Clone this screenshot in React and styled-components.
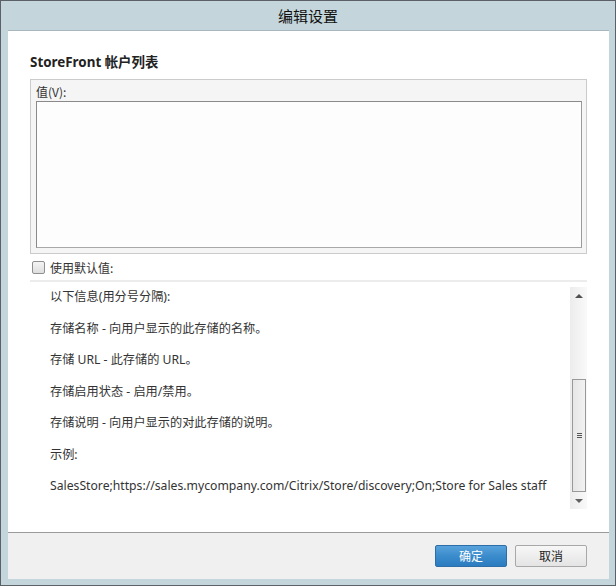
import React from "react";
import styled, { createGlobalStyle } from "styled-components";

const Global = createGlobalStyle`
  html, body { margin: 0; padding: 0; background: #c5d7dd; }
  body { font-family: "Noto Sans", "Noto Sans CJK SC", sans-serif; }
  * { box-sizing: border-box; }
`;

const Frame = styled.div`
  width: 616px;
  height: 586px;
  background: #c4d6dc;
  border: 1px solid #5b6167;
  display: flex;
  flex-direction: column;
`;

const TitleBar = styled.div`
  height: 29px;
  display: flex;
  align-items: center;
  justify-content: center;
  font-family: "Noto Sans CJK SC", sans-serif;
  font-size: 15px;
  color: #111;
`;

const Panel = styled.div`
  flex: 1;
  margin: 0 6px 6px 7px;
  background: #fff;
  border-top: 1px solid #a7b7bd;
  display: flex;
  flex-direction: column;
`;

const Content = styled.div`
  flex: 1;
  padding: 22px 22px 0 22px;
  display: flex;
  flex-direction: column;
`;

const Heading = styled.div`
  font-family: "Noto Sans", "Noto Sans CJK SC", sans-serif;
  font-weight: 700;
  font-size: 13.4px;
  line-height: 18px;
  color: #222;
`;

const GroupBox = styled.div`
  margin-top: 8px;
  height: 175px;
  background: #f5f5f5;
  border: 1px solid #cbcbcb;
  padding: 4px 4px 5px 5px;
  display: flex;
  flex-direction: column;
`;

const FieldLabel = styled.div`
  font-family: "Noto Sans CJK SC", sans-serif;
  font-size: 12px;
  line-height: 16px;
  color: #333;
  margin-bottom: 1px;
`;

const TextArea = styled.div`
  flex: 1;
  background: #fdfdfd;
  border: 1px solid #8a8a8a;
  border-right-color: #9a9a9a;
  border-bottom-color: #a8a8a8;
`;

const CheckRow = styled.label`
  display: flex;
  align-items: center;
  gap: 5px;
  height: 26px;
  padding-left: 2px;
  font-family: "Noto Sans CJK SC", sans-serif;
  font-size: 12px;
  color: #333;
`;

const CheckBox = styled.span`
  width: 13px;
  height: 13px;
  border: 1px solid #8f8f8f;
  border-radius: 2px;
  background: linear-gradient(#f4f4f4, #dedede);
`;

const Separator = styled.div`
  height: 2px;
  background: #ececec;
`;

const DescArea = styled.div`
  display: flex;
  height: 227px;
`;

const DescText = styled.div`
  flex: 1;
  padding: 6px 0 0 20px;
  display: flex;
  flex-direction: column;
  gap: 13.5px;
  font-family: "Noto Sans", "Noto Sans CJK SC", sans-serif;
  font-size: 12.2px;
  line-height: 18px;
  color: #333;
  overflow: hidden;
  white-space: nowrap;
`;

const Scrollbar = styled.div`
  width: 17px;
  margin-top: 5px;
  background: linear-gradient(to right, #ececec, #f9f9f9);
  display: flex;
  flex-direction: column;
  align-items: center;
`;

const Arrow = styled.div`
  height: 17px;
  display: flex;
  align-items: center;
  justify-content: center;
  &::after {
    content: "";
    border-left: 4px solid transparent;
    border-right: 4px solid transparent;
    ${(p) =>
      p.$up
        ? "border-bottom: 4px solid #505050;"
        : "border-top: 4px solid #606060;"}
  }
`;

const Track = styled.div`
  flex: 1;
  width: 100%;
  display: flex;
  flex-direction: column;
  justify-content: flex-end;
  padding: 0 1px 0 2px;
`;

const Thumb = styled.div`
  height: 113px;
  width: 100%;
  border: 1px solid #999;
  background: linear-gradient(to right, #e6e6e6, #f2f2f2);
  display: flex;
  align-items: center;
  justify-content: center;
  &::after {
    content: "";
    width: 5px;
    height: 5px;
    background: repeating-linear-gradient(#555 0 1px, transparent 1px 2px);
  }
`;

const Footer = styled.div`
  height: 47px;
  border-top: 1px solid #9a9a9a;
  background: #f0f0f0;
  display: flex;
  align-items: center;
  justify-content: flex-end;
  gap: 8px;
  padding: 0 22px 1px 0;
`;

const Button = styled.button`
  width: 72px;
  height: 22px;
  font-family: "Noto Sans CJK SC", sans-serif;
  font-size: 12px;
  padding: 0;
  border-radius: 2px;
  ${(p) =>
    p.$primary
      ? `
    color: #fff;
    border: 1px solid #2c6ea5;
    background: linear-gradient(#58a3dc, #3b8ccc 50%, #2a7cc0);
  `
      : `
    color: #222;
    border: 1px solid #a8a8a8;
    background: linear-gradient(#f7f7f7, #e4e4e4);
  `}
`;

const lines = [
  "以下信息(用分号分隔):",
  "存储名称 - 向用户显示的此存储的名称。",
  "存储 URL - 此存储的 URL。",
  "存储启用状态 - 启用/禁用。",
  "存储说明 - 向用户显示的对此存储的说明。",
  "示例:",
  "SalesStore;https://sales.mycompany.com/Citrix/Store/discovery;On;Store for Sales staff",
];

export default function App() {
  return (
    <>
      <Global />
      <Frame>
        <TitleBar>编辑设置</TitleBar>
        <Panel>
          <Content>
            <Heading>StoreFront 帐户列表</Heading>
            <GroupBox>
              <FieldLabel>值(V):</FieldLabel>
              <TextArea />
            </GroupBox>
            <CheckRow>
              <CheckBox />
              使用默认值:
            </CheckRow>
            <Separator />
            <DescArea>
              <DescText>
                {lines.map((l) => (
                  <div key={l}>{l}</div>
                ))}
              </DescText>
              <Scrollbar>
                <Arrow $up />
                <Track>
                  <Thumb />
                </Track>
                <Arrow />
              </Scrollbar>
            </DescArea>
          </Content>
          <Footer>
            <Button $primary>确定</Button>
            <Button>取消</Button>
          </Footer>
        </Panel>
      </Frame>
    </>
  );
}
